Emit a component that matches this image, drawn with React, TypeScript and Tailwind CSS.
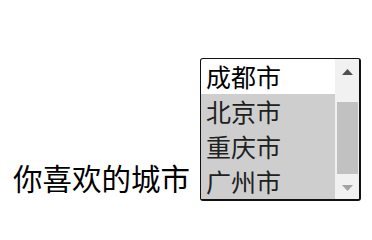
const cities = [
  { name: '成都市', selected: false },
  { name: '北京市', selected: true },
  { name: '重庆市', selected: true },
  { name: '广州市', selected: true },
];

export default function App() {
  return (
    <div className="pt-[58px] pl-[13px] flex items-end font-['Noto_Sans_CJK_SC',sans-serif] text-black">
      <label className="text-[29.5px] leading-none mb-[9px] w-[187px] shrink-0">你喜欢的城市</label>

      {/* Multi-select listbox */}
      <div className="w-[161px] h-[143px] border-t border-l border-r-2 border-b-2 border-[#111111] rounded-[3px] bg-white flex overflow-hidden">
        <div className="flex-1 flex flex-col">
          {cities.map((c) => (
            <div
              key={c.name}
              className={`h-[35px] pl-[5px] text-[25px] leading-[35px] ${c.selected ? 'bg-[#cecece] text-[#202020]' : ''}`}
            >
              {c.name}
            </div>
          ))}
        </div>

        {/* Scrollbar */}
        <div className="w-[24px] bg-[#f1f1f1] flex flex-col">
          <div className="h-[23px] flex items-center justify-center pt-[3px]">
            <svg width="11" height="6" viewBox="0 0 11 6">
              <polygon points="5.5,0 11,6 0,6" fill="#505050" />
            </svg>
          </div>
          <div className="flex-1 pt-[20px] pb-[2px] pl-[2px] pr-[1px] flex">
            <div className="flex-1 bg-[#c1c1c1]" />
          </div>
          <div className="h-[23px] flex items-center justify-center">
            <svg width="11" height="6" viewBox="0 0 11 6">
              <polygon points="0,0 11,0 5.5,6" fill="#a3a3a3" />
            </svg>
          </div>
        </div>
      </div>
    </div>
  );
}
